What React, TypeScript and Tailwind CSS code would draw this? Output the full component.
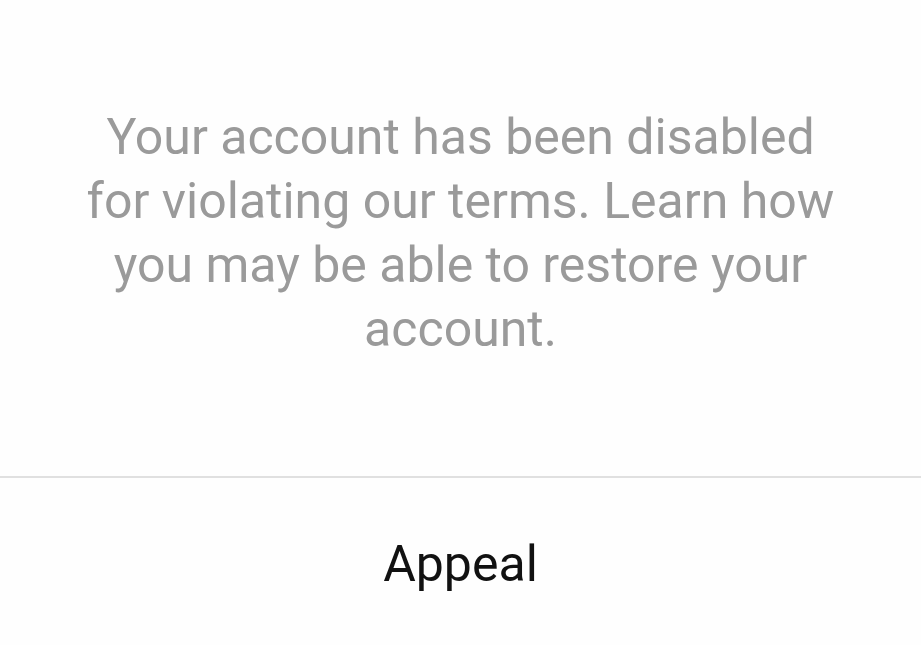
export default function App() {
  return (
    <div className="w-[921px] h-[645px] bg-[#fefefe] flex flex-col overflow-hidden" style={{ fontFamily: "Roboto, 'Noto Sans', sans-serif" }}>
      <div className="h-[476px] flex flex-col items-center pt-[105px]">
        <p className="text-[50px] leading-[64px] text-[#9a9a9a] text-center whitespace-nowrap">
          Your account has been disabled<br />
          for violating our terms. Learn how<br />
          you may be able to restore your<br />
          account.
        </p>
      </div>
      <div className="h-[2px] bg-[#e0e0e0]" />
      <div className="flex-1 flex items-start justify-center pt-[58px]">
        <span className="text-[50px] leading-[56px] text-[#111111]">Appeal</span>
      </div>
    </div>
  );
}
